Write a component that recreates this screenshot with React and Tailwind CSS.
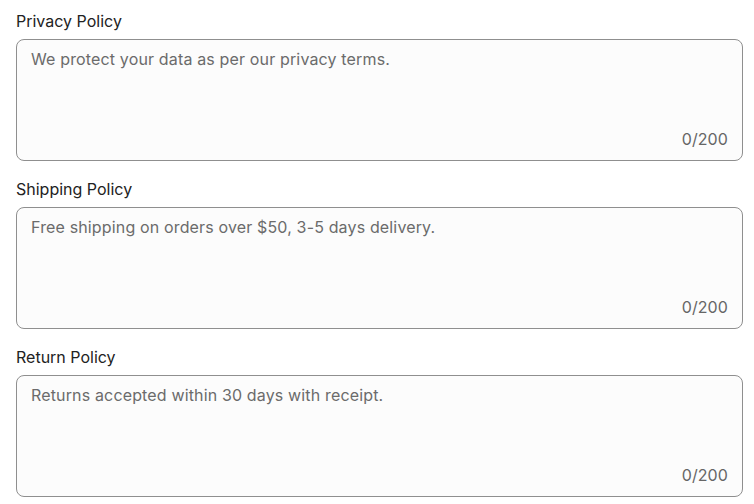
import React from "react";

const policies = [
  { id: "privacy", label: "Privacy Policy", placeholder: "We protect your data as per our privacy terms." },
  { id: "shipping", label: "Shipping Policy", placeholder: "Free shipping on orders over $50, 3-5 days delivery." },
  { id: "return", label: "Return Policy", placeholder: "Returns accepted within 30 days with receipt." },
];

function PolicyField({ policy }) {
  return (
    <div className="flex flex-col">
      <label htmlFor={policy.id} className="text-[16px] leading-6 text-[#222222] mb-[6px]">
        {policy.label}
      </label>
      <div className="flex flex-col h-[122px] rounded-lg border border-[#8f8f8f] bg-[#fcfcfc]">
        <textarea
          id={policy.id}
          placeholder={policy.placeholder}
          maxLength={200}
          className="flex-1 resize-none bg-transparent pl-[14px] pr-[14px] pt-[7px] text-[16px] leading-6 tracking-[0.15px] text-[#333] placeholder:text-[#6b6b6b] outline-none"
        />
        <div className="pr-[14px] pb-[9px] text-right text-[16px] leading-6 tracking-[0.1px] text-[#666666]">0/200</div>
      </div>
    </div>
  );
}

export default function App() {
  return (
    <div
      className="min-h-screen bg-white pt-[9px] pl-4 w-[743px] flex flex-col gap-4"
      style={{ fontFamily: "Inter, 'Noto Sans', sans-serif" }}
    >
      {policies.map((p) => (
        <PolicyField key={p.id} policy={p} />
      ))}
    </div>
  );
}
